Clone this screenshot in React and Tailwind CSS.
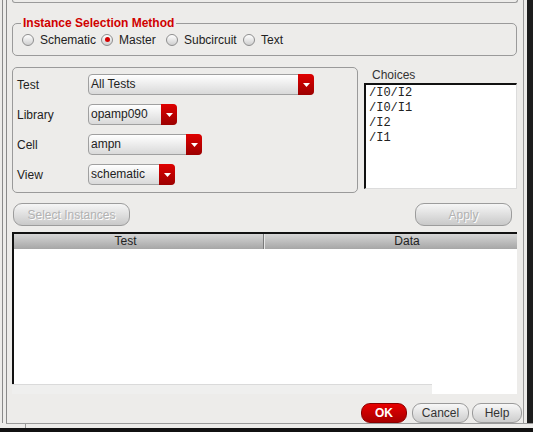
import React from 'react';

const sans = { fontFamily: '"Liberation Sans", Arial, sans-serif' };

function Radio({ label, checked, className }) {
  return (
    <div className={`flex items-center ${className}`}>
      <span className="w-[12px] h-[12px] rounded-full border border-[#8e8e8e] bg-linear-to-b from-white to-[#cfcfcf] flex items-center justify-center">
        {checked && <span className="w-[5px] h-[5px] rounded-full bg-[#d40000]" />}
      </span>
      <span className="ml-[6px] text-[12px] text-[#222]">{label}</span>
    </div>
  );
}

function Combo({ value, className }) {
  return (
    <div className={`flex h-[21px] rounded-[4px] border border-[#a0a0a0] bg-linear-to-b from-white to-[#d9d9d9] ${className}`}>
      <span className="flex-1 pl-[2px] text-[12px] leading-[19px] text-[#222]">{value}</span>
      <span className="w-[16px] -my-px -mr-px rounded-r-[4px] bg-linear-to-b from-[#e00000] to-[#9c0000] flex items-center justify-center">
        <svg width="7" height="4" viewBox="0 0 7 4">
          <path d="M0 0H7L3.5 4Z" fill="#fff" />
        </svg>
      </span>
    </div>
  );
}

function Row({ label, children }) {
  return (
    <div className="flex items-center h-[21px]">
      <span className="w-[71px] text-[12px] text-[#222]">{label}</span>
      {children}
    </div>
  );
}

export default function App() {
  return (
    <div className="w-[533px] h-[432px] bg-[#edecea] flex flex-col overflow-hidden" style={sans}>
      <div className="flex flex-1 min-h-0">
        {/* left window frame */}
        <div className="ml-[2px] w-[5px] flex-none border-l border-r border-[#8a8a8a]" />

        {/* main */}
        <div className="w-[516px] flex-none flex flex-col pl-[5px] pr-[6px]">
          <div className="h-[3px] mr-[-1px] border-b border-x border-[#9a9a9a] rounded-b-[5px]" />

          {/* Instance Selection Method */}
          <div className="relative mt-[20px] h-[33px] border border-[#9a9a9a] rounded-[5px] flex items-center pl-[9px]">
            <span className="absolute -top-[9px] left-[8px] px-[2px] bg-[#edecea] text-[12px] font-bold leading-[16px] text-[#d00000]">
              Instance Selection Method
            </span>
            <Radio label="Schematic" className="w-[79px]" />
            <Radio label="Master" checked className="w-[65px]" />
            <Radio label="Subcircuit" className="w-[77px]" />
            <Radio label="Text" />
          </div>

          {/* selection fields + choices */}
          <div className="mt-[11px] flex">
            <div className="w-[346px] h-[126px] border border-[#9a9a9a] rounded-[5px] pl-[4px] pt-[6px] flex flex-col gap-[9px]">
              <Row label="Test"><Combo value="All Tests" className="w-[226px]" /></Row>
              <Row label="Library"><Combo value="opamp090" className="w-[89px]" /></Row>
              <Row label="Cell"><Combo value="ampn" className="w-[114px]" /></Row>
              <Row label="View"><Combo value="schematic" className="w-[87px]" /></Row>
            </div>
            <div className="ml-[6px] flex-1 flex flex-col">
              <span className="h-[16px] pl-[8px] text-[12px] leading-[16px] text-[#333]">Choices</span>
              <div
                className="h-[106px] bg-white border-t-2 border-l-2 border-r border-b border-t-[#111] border-l-[#111] border-r-[#dcdcdc] border-b-[#dcdcdc] pl-[3px] pt-[1px] text-[12px] leading-[15px] text-[#222]"
                style={{ fontFamily: '"Liberation Mono", "Courier New", monospace' }}
              >
                <div>/I0/I2</div>
                <div>/I0/I1</div>
                <div>/I2</div>
                <div>/I1</div>
              </div>
            </div>
          </div>

          {/* action buttons */}
          <div className="mt-[10px] h-[23px] flex justify-between">
            <button className="ml-px w-[117px] h-[23px] rounded-[9px] border border-[#9c9c9c] bg-linear-to-b from-[#f6f6f6] to-[#c9c9c9] text-[12px] text-[#b2b2b2] [text-shadow:1px_1px_0_#fff]">
              Select Instances
            </button>
            <button className="mr-[5px] w-[97px] h-[23px] rounded-[9px] border border-[#9c9c9c] bg-linear-to-b from-[#f6f6f6] to-[#c9c9c9] text-[12px] text-[#b2b2b2] [text-shadow:1px_1px_0_#fff]">
              Apply
            </button>
          </div>

          {/* results table */}
          <div className="mt-[6px] h-[152px] flex flex-col border-t-2 border-l-2 border-[#111] bg-white">
            <div className="h-[15px] flex bg-linear-to-b from-[#d6d6d6] to-[#a6a6a6] text-[12px] leading-[15px] text-[#222]">
              <div className="w-[250px] border-r border-[#7a7a7a] flex justify-center pr-[26px]">Test</div>
              <div className="flex-1 border-l border-[#e6e6e6] flex justify-center pl-[32px]">Data</div>
            </div>
            <div className="flex-1" />
          </div>
          <div className="h-[10px] flex">
            <div className="w-[420px] bg-[#efefee] border-t border-[#dadada]" />
            <div className="flex-1 bg-white" />
          </div>

          {/* dialog buttons */}
          <div className="mt-[9px] h-[20px] flex justify-end -mr-[5px]">
            <button className="w-[46px] h-[20px] rounded-[9px] border border-[#8a0000] bg-linear-to-b from-[#e80000] to-[#a80000] text-[12px] font-bold text-white">
              OK
            </button>
            <button className="ml-[5px] w-[57px] h-[20px] rounded-[9px] border border-[#9a9a9a] bg-linear-to-b from-[#f8f8f8] to-[#cdcdcd] text-[12px] text-[#333]">
              Cancel
            </button>
            <button className="ml-[3px] w-[50px] h-[20px] rounded-[9px] border border-[#9a9a9a] bg-linear-to-b from-[#f8f8f8] to-[#cdcdcd] text-[12px] text-[#333]">
              Help
            </button>
          </div>
        </div>

        {/* right window frame */}
        <div className="w-[10px] flex-none flex border-l border-[#9a9a9a]">
          <div className="w-[3px]" />
          <div className="flex-1 bg-[#1c1c1c]" />
        </div>
      </div>
      <div className="h-[5px] flex-none ml-[6px] border-t border-[#9a9a9a] flex">
        <div className="ml-[19px] w-px h-full bg-[#9a9a9a]" />
      </div>
      <div className="h-[4px] flex-none bg-[#111]" />
    </div>
  );
}
